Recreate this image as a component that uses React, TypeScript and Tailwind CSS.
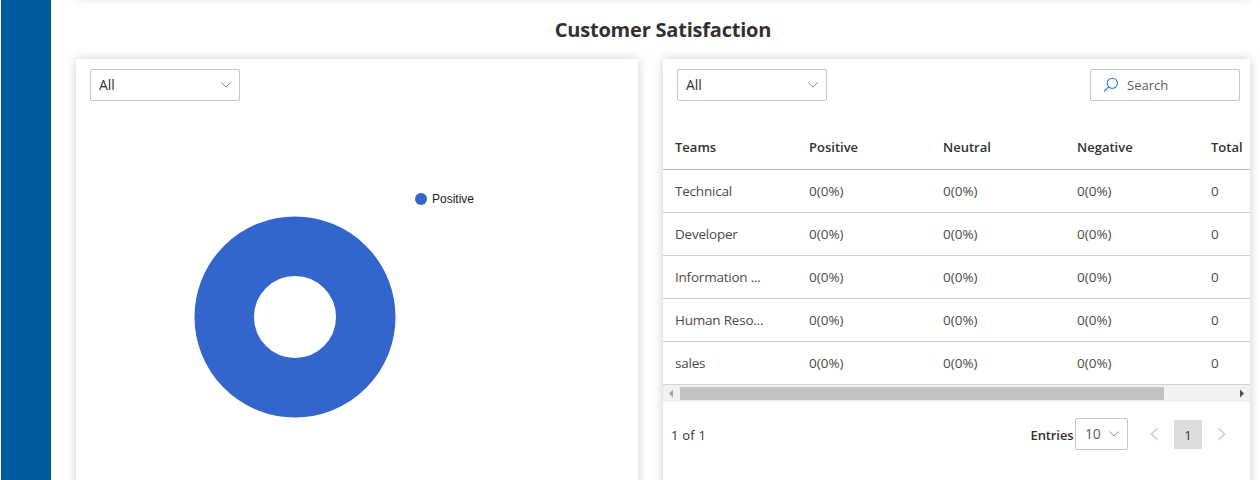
import React from "react";

const teams = ["Technical", "Developer", "Information ...", "Human Reso...", "sales"];

function Chevron() {
  return (
    <svg width="12" height="8" viewBox="0 0 12 8" fill="none" stroke="#7a8a96" strokeWidth="1">
      <path d="M1.3 1.5 L6 6.1 L10.7 1.5" />
    </svg>
  );
}

function Select() {
  return (
    <div className="flex h-8 w-[150px] items-center justify-between rounded-[2px] border border-[#c8c6c4] bg-white pr-[7px] pl-2">
      <span className="text-[14px] leading-5 tracking-[-0.1px] text-[#323130]">All</span>
      <Chevron />
    </div>
  );
}

function PageArrow({ right = false }: { right?: boolean }) {
  return (
    <svg width="10" height="14" viewBox="0 0 10 14" fill="none" stroke="#d2d0ce" strokeWidth="1.7">
      <path d={right ? "M1.6 1.4 L7.6 7 L1.6 12.6" : "M8.4 1.4 L2.4 7 L8.4 12.6"} />
    </svg>
  );
}

export default function App() {
  return (
    <div className="flex h-[480px] w-[1260px] overflow-hidden bg-white pl-px font-['Open_Sans','Noto_Sans',sans-serif]">
      <aside className="w-[50px] shrink-0 bg-[#005a9e]" />
      <main className="flex w-[1209px] flex-col pr-[10px] pl-[25px]">
        <div className="-mt-[43px] mb-[3px] h-10 shrink-0 shadow-[0_0_10px_#ccc]" />
        <h2 className="flex h-[59px] shrink-0 items-center justify-center text-[20px] leading-7 font-bold tracking-[-0.21px] text-[#323130]">
          Customer Satisfaction
        </h2>
        <div className="flex h-[500px] shrink-0 gap-[25px]">
          <section className="w-[562px] bg-white px-[14px] pt-[10px] shadow-[0_0_10px_#ccc]">
            <Select />
            <div className="flex pt-[91px] pl-[104px]">
              <svg className="mt-[24px] shrink-0" width="202" height="202" viewBox="0 0 202 202">
                <circle cx="101" cy="101" r="70.75" fill="none" stroke="#3366cc" strokeWidth="59.5" />
              </svg>
              <div className="ml-[19px] flex h-[14px] items-center gap-[5px] font-['Liberation_Sans',Arial,sans-serif] text-[12px] text-[#222]">
                <span className="size-3 rounded-full bg-[#3366cc]" />
                Positive
              </div>
            </div>
          </section>
          <section className="w-[587px] bg-white shadow-[0_0_10px_#ccc]">
            <div className="flex justify-between pt-[10px] pr-[10px] pl-[14px]">
              <Select />
              <div className="flex h-8 w-[150px] items-center gap-[8px] rounded-[2px] border border-[#c8c6c4] pl-[12px]">
                <svg width="16" height="16" viewBox="0 0 16 16" fill="none" stroke="#2f7bd6" strokeWidth="1.1">
                  <circle cx="9.3" cy="6.3" r="5.1" />
                  <path d="M5.6 9.9 L1 14.5" />
                </svg>
                <span className="pt-px text-[13px] text-[#605e5c]">Search</span>
              </div>
            </div>
            <div className="mt-[24px] overflow-hidden">
              <div className="flex h-[45px] w-[682px] items-center border-b border-[#bdb8bb] pt-[2px] pl-[12px] text-[13px] font-semibold text-[#323130]">
                {["Teams", "Positive", "Neutral", "Negative", "Total"].map((h) => (
                  <div key={h} className="w-[134px] shrink-0">{h}</div>
                ))}
              </div>
              {teams.map((t) => (
                <div key={t} className="flex h-[43px] w-[682px] items-center border-b border-[#d4cfd2] pb-px pl-[12px] text-[13.5px] leading-5 text-[#4c4a48]">
                  <div className="w-[134px] shrink-0 tracking-[-0.22px]">{t}</div>
                  <div className="w-[134px] shrink-0">0(0%)</div>
                  <div className="w-[134px] shrink-0">0(0%)</div>
                  <div className="w-[134px] shrink-0">0(0%)</div>
                  <div>0</div>
                </div>
              ))}
            </div>
            <div className="flex h-[17px] items-center bg-[#f1f1f1]">
              <svg className="shrink-0" width="17" height="17" viewBox="0 0 17 17">
                <path d="M10 4.5 V12.5 L6 8.5 Z" fill="#a3a3a3" />
              </svg>
              <div className="h-[13px] w-[484px] bg-[#c1c1c1]" />
              <svg className="ml-auto shrink-0" width="17" height="17" viewBox="0 0 17 17">
                <path d="M7 4.5 V12.5 L11 8.5 Z" fill="#505050" />
              </svg>
            </div>
            <div className="mt-4 flex h-8 items-center pl-2 text-[13px] text-[#323130]">
              <span className="pt-[3px] tracking-[0.2px]">1 of 1</span>
              <span className="ml-auto pt-[3px] font-semibold tracking-[-0.1px]">Entries</span>
              <div className="ml-[1.5px] flex h-8 w-[53px] items-center justify-between rounded-[2px] border border-[#c8c6c4] pr-[7px] pl-[9px] text-[14px] leading-5 tracking-[-0.3px] text-[#605e5c]">
                <span className="pb-px">10</span>
                <Chevron />
              </div>
              <div className="ml-[21px] flex"><PageArrow /></div>
              <div className="ml-[15px] flex h-[29px] w-7 items-center justify-center bg-[#dcdcdc] pt-[3px]">1</div>
              <div className="mr-[23px] ml-[15px] flex"><PageArrow right /></div>
            </div>
          </section>
        </div>
      </main>
    </div>
  );
}
